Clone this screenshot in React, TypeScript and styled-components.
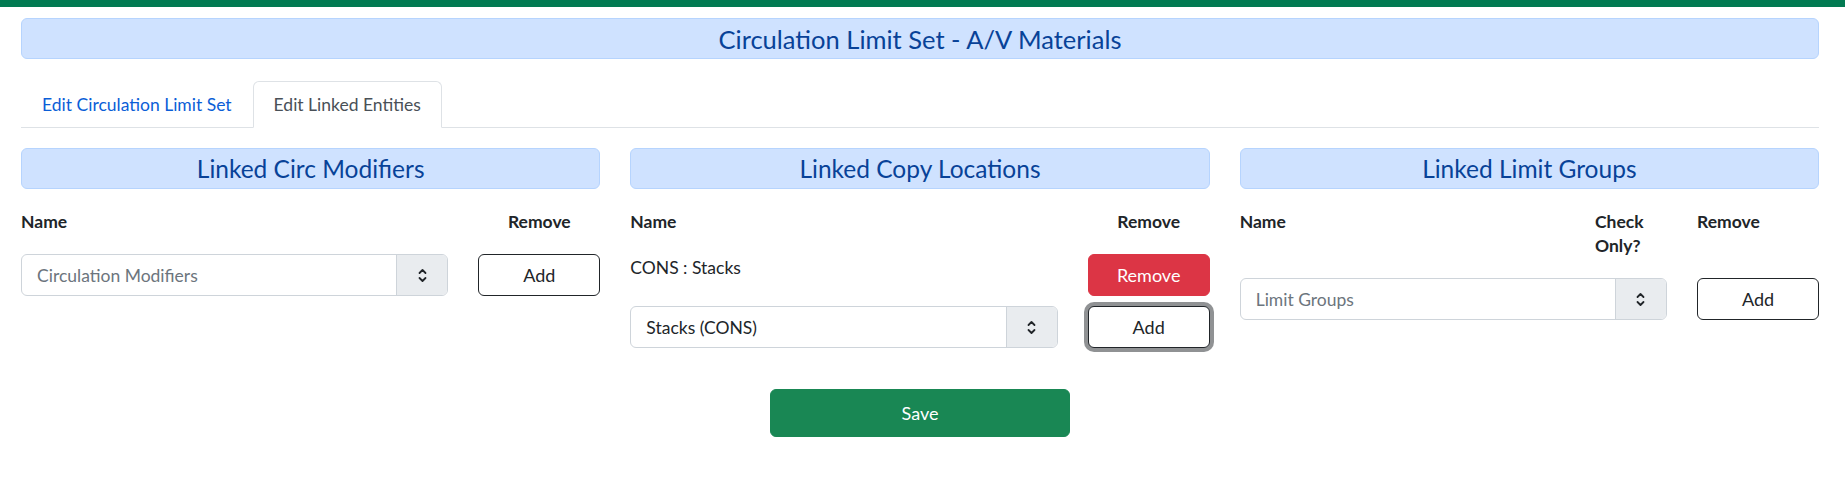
import styled, { createGlobalStyle, css } from 'styled-components';

const GlobalStyle = createGlobalStyle`
  html, body {
    margin: 0;
    padding: 0;
    background: #fff;
  }
  body {
    font-family: Lato, "Liberation Sans", sans-serif;
    font-size: 17.5px;
    color: #212529;
  }
  * {
    box-sizing: border-box;
  }
`;

const TopBar = styled.div`
  height: 7px;
  background: #027a52;
`;

const Page = styled.div`
  padding: 11px 26px 40px 21px;
`;

const Banner = styled.div<{ $size: number }>`
  height: 41px;
  display: flex;
  align-items: center;
  justify-content: center;
  background: #cfe2ff;
  border: 1px solid #b6d4fe;
  border-radius: 6px;
  color: #084298;
  font-size: ${(p) => p.$size}px;
  line-height: 1;
  padding-top: 2px;
`;

const Tabs = styled.div`
  display: flex;
  margin-top: 22px;
  border-bottom: 1px solid #dee2e6;
`;

const Tab = styled.div<{ $active?: boolean }>`
  height: 47px;
  margin-bottom: -1px;
  padding: 0 20px;
  display: flex;
  align-items: center;
  border: 1px solid transparent;
  border-radius: 6px 6px 0 0;
  color: #0b5ed7;
  font-size: 17.5px;
  ${(p) =>
    p.$active &&
    css`
      color: #495057;
      background: #fff;
      border-color: #dee2e6 #dee2e6 #fff;
    `}
`;

const Columns = styled.div`
  display: grid;
  grid-template-columns: repeat(3, minmax(0, 1fr));
  column-gap: 30px;
  margin-top: 20px;
`;

const Column = styled.section`
  display: flex;
  flex-direction: column;
`;

const HeaderRow = styled.div<{ $cols: string }>`
  display: grid;
  grid-template-columns: ${(p) => p.$cols};
  column-gap: 30px;
  margin: 21px 0 20px;
  font-weight: 700;
  line-height: 24px;
`;

const HeadCell = styled.div<{ $center?: boolean }>`
  text-align: ${(p) => (p.$center ? 'center' : 'left')};
`;

const EntryRow = styled.div<{ $gap?: number }>`
  display: grid;
  grid-template-columns: minmax(0, 1fr) 122px;
  column-gap: 30px;
  align-items: start;
  margin-top: ${(p) => p.$gap ?? 0}px;
`;

const LinkedName = styled.div`
  padding-top: 2px;
  line-height: 24px;
`;

const SelectBox = styled.div`
  height: 42px;
  display: flex;
  border: 1px solid #ced4da;
  border-radius: 6px;
  overflow: hidden;
`;

const SelectValue = styled.div<{ $placeholder?: boolean }>`
  flex: 1;
  display: flex;
  align-items: center;
  padding: 0 15px;
  color: ${(p) => (p.$placeholder ? '#6c757d' : '#212529')};
`;

const SelectAddon = styled.div`
  width: 51px;
  display: flex;
  align-items: center;
  justify-content: center;
  background: #e9ecef;
  border-left: 1px solid #ced4da;
`;

const Button = styled.button<{ $variant: 'outline' | 'danger' | 'success'; $focused?: boolean }>`
  height: 42px;
  width: 100%;
  border-radius: 6px;
  font-family: inherit;
  font-size: 18px;
  cursor: pointer;
  padding: 0 12px;
  ${(p) =>
    p.$variant === 'outline' &&
    css`
      background: #fff;
      border: 1px solid #212529;
      color: #212529;
    `}
  ${(p) =>
    p.$variant === 'danger' &&
    css`
      background: #dc3545;
      border: 1px solid #dc3545;
      color: #fff;
    `}
  ${(p) =>
    p.$variant === 'success' &&
    css`
      background: #198754;
      border: 1px solid #198754;
      color: #fff;
    `}
  ${(p) =>
    p.$focused &&
    css`
      box-shadow: 0 0 0 4px rgba(33, 37, 41, 0.5);
    `}
`;

const Footer = styled.div`
  display: flex;
  justify-content: center;
  margin-top: 41px;
`;

const SaveButton = styled(Button)`
  width: 300px;
  height: 48px;
`;

const UpDown = () => (
  <svg width="9" height="15" viewBox="0 0 9 15" fill="none" stroke="#212529" strokeWidth="1.8" strokeLinecap="round" strokeLinejoin="round">
    <path d="M1.5 5 L4.5 2 L7.5 5" />
    <path d="M1.5 10 L4.5 13 L7.5 10" />
  </svg>
);

const Select = ({ value, placeholder }: { value?: string; placeholder?: string }) => (
  <SelectBox>
    <SelectValue $placeholder={!value}>{value ?? placeholder}</SelectValue>
    <SelectAddon>
      <UpDown />
    </SelectAddon>
  </SelectBox>
);

export default function App() {
  return (
    <>
      <GlobalStyle />
      <TopBar />
      <Page>
        <Banner $size={25.5}>Circulation Limit Set - A/V Materials</Banner>

        <Tabs>
          <Tab>Edit Circulation Limit Set</Tab>
          <Tab $active>Edit Linked Entities</Tab>
        </Tabs>

        <Columns>
          <Column>
            <Banner $size={24.5}>Linked Circ Modifiers</Banner>
            <HeaderRow $cols="minmax(0, 1fr) 122px">
              <HeadCell>Name</HeadCell>
              <HeadCell $center>Remove</HeadCell>
            </HeaderRow>
            <EntryRow>
              <Select placeholder="Circulation Modifiers" />
              <Button $variant="outline">Add</Button>
            </EntryRow>
          </Column>

          <Column>
            <Banner $size={24.5}>Linked Copy Locations</Banner>
            <HeaderRow $cols="minmax(0, 1fr) 122px">
              <HeadCell>Name</HeadCell>
              <HeadCell $center>Remove</HeadCell>
            </HeaderRow>
            <EntryRow>
              <LinkedName>CONS : Stacks</LinkedName>
              <Button $variant="danger">Remove</Button>
            </EntryRow>
            <EntryRow $gap={10}>
              <Select value="Stacks (CONS)" />
              <Button $variant="outline" $focused>
                Add
              </Button>
            </EntryRow>
          </Column>

          <Column>
            <Banner $size={24.5}>Linked Limit Groups</Banner>
            <HeaderRow $cols="minmax(0, 1fr) 72px 122px">
              <HeadCell>Name</HeadCell>
              <HeadCell>Check Only?</HeadCell>
              <HeadCell>Remove</HeadCell>
            </HeaderRow>
            <EntryRow>
              <Select placeholder="Limit Groups" />
              <Button $variant="outline">Add</Button>
            </EntryRow>
          </Column>
        </Columns>

        <Footer>
          <SaveButton $variant="success">Save</SaveButton>
        </Footer>
      </Page>
    </>
  );
}
